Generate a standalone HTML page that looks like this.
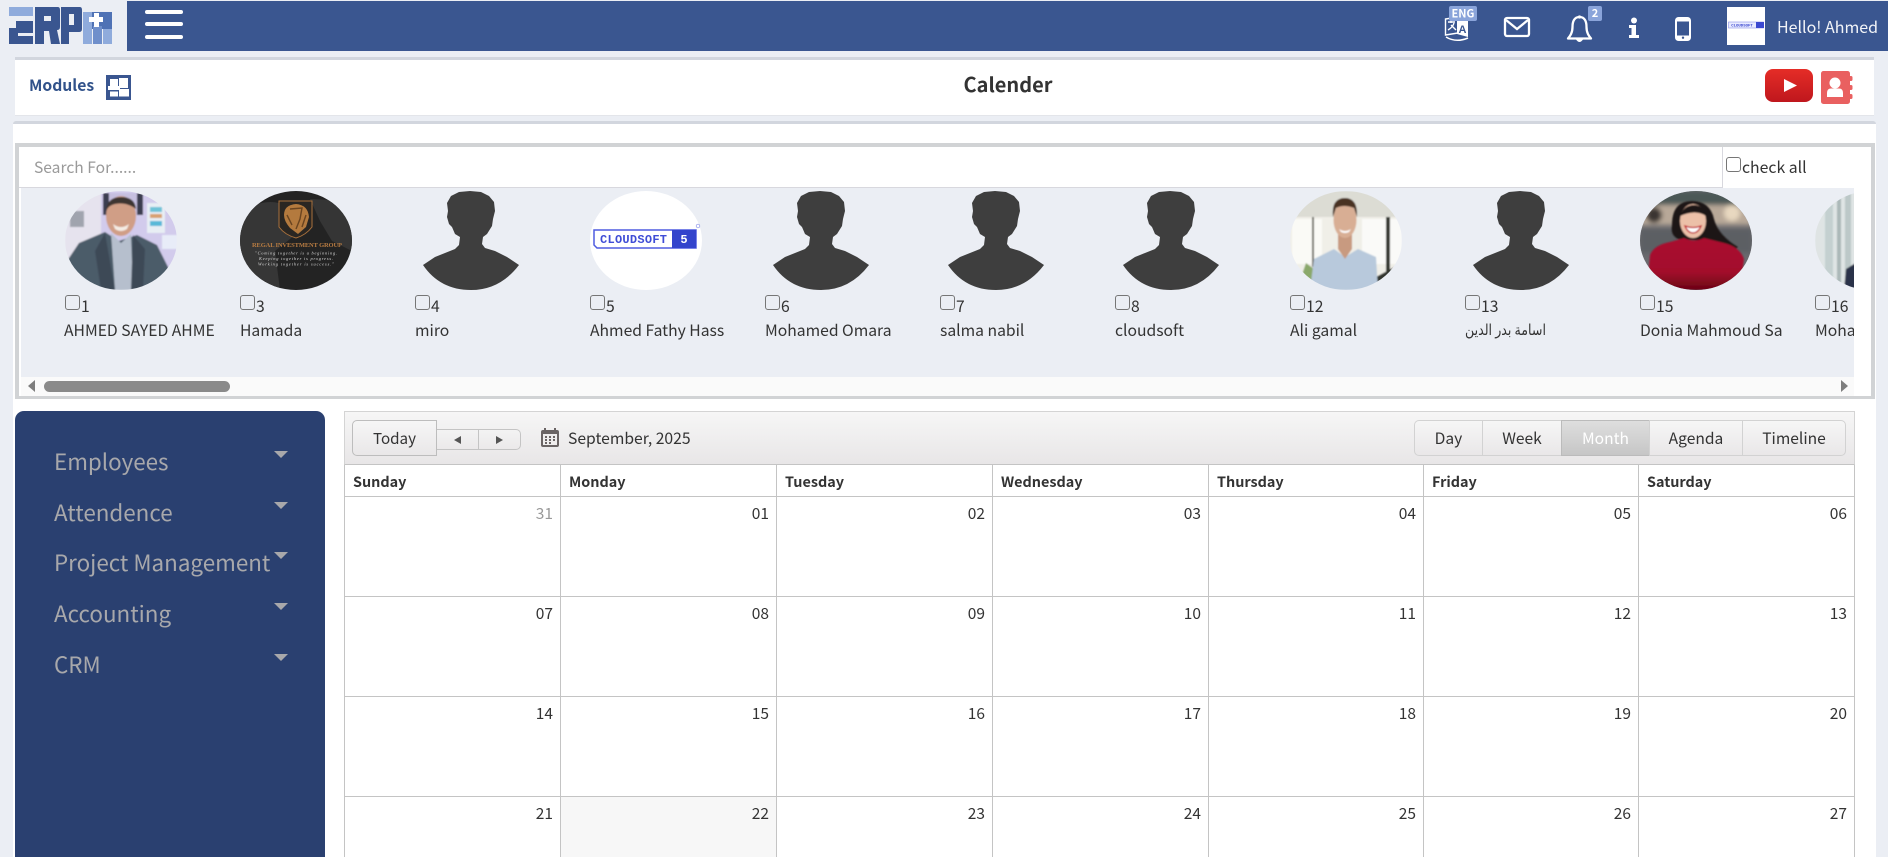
<!DOCTYPE html>
<html lang="en">
<head>
<meta charset="utf-8">
<title>Calender</title>
<style>
*{box-sizing:border-box}
html,body{margin:0;padding:0;width:1888px;height:857px;overflow:hidden;background:#ebeef4}
body{position:relative;font-family:"Noto Sans CJK JP","Liberation Sans",sans-serif;font-size:15.7px;color:#333}
.a{position:absolute;white-space:nowrap}
.cb{position:absolute;width:15px;height:15px;border:1px solid #767676;border-radius:3px}
.num{position:absolute;font-size:15.7px;line-height:20px;color:#333}
.nm{position:absolute;font-size:15.7px;line-height:22px;color:#333;white-space:nowrap}
svg{position:absolute;display:block;overflow:visible}
.menu{position:absolute;left:54px;font-size:22.4px;line-height:32px;color:#a8a8ab;white-space:nowrap}
.car{position:absolute;left:274px;width:0;height:0;border-left:7px solid transparent;border-right:7px solid transparent;border-top:7px solid #a8a8ab}
.grid{position:absolute;left:344px;top:465px;width:1511px;display:grid;grid-template-columns:216px 216px 216px 216px 215px 215px 215px;border-left:1px solid #c4c4c4;border-right:1px solid #c4c4c4}
.h{height:32px;border-right:1px solid #c4c4c4;border-bottom:1px solid #c4c4c4;font-weight:700;font-size:14.4px;line-height:33px;padding-left:8px;color:#333}
.c{height:100px;border-right:1px solid #c4c4c4;border-bottom:1px solid #c4c4c4;text-align:right;padding:6px 7px 0 0;font-size:15.5px;line-height:20px;color:#333}
.h:nth-child(7n),.c:nth-child(7n){border-right:0}
.vb{position:absolute;top:420px;height:36px;line-height:34px;text-align:center;font-size:15.6px;color:#333;border:1px solid #d2d2d2;border-right:0;background:linear-gradient(#f6f6f6,#e9e7e8)}
</style>
</head>
<body>

<!-- top bar -->
<div class="a" style="left:127px;top:1px;width:1761px;height:50px;background:#3a5690"></div>

<!-- logo -->
<svg style="left:0;top:0" width="127" height="51" viewBox="0 0 127 51">
<rect x="9" y="7" width="24" height="9" fill="#8fabdc"/>
<path d="M16 21H33V33H18V36H33V44H9V28H16Z" fill="#3a5690"/>
<path fill-rule="evenodd" d="M35 7H58Q60 7 60 10V27Q60 30 57 30L60 44H51L49 31H44V44H35ZM44 16V21H51V16Z" fill="#3a5690"/>
<path fill-rule="evenodd" d="M61 7H80Q82 7 82 10V29Q82 32 79 32H69V44H61ZM69 14V25H74V14Z" fill="#3a5690"/>
<rect x="83" y="12" width="29" height="17" fill="#4f72b5"/>
<rect x="83" y="12" width="9" height="32" fill="#8fabdc"/>
<rect x="103" y="29" width="9" height="15" fill="#8fabdc"/>
<rect x="93" y="26" width="9" height="18" fill="#6f8fcb"/>
<rect x="94" y="13" width="5" height="14" fill="#fff"/>
<rect x="89" y="17" width="14" height="5" fill="#fff"/>
</svg>

<!-- hamburger -->
<div class="a" style="left:145px;top:10px;width:38px;height:4px;background:#fff;border-radius:2px"></div>
<div class="a" style="left:145px;top:22px;width:38px;height:4px;background:#fff;border-radius:2px"></div>
<div class="a" style="left:145px;top:35px;width:38px;height:4px;background:#fff;border-radius:2px"></div>

<!-- translate icon -->
<svg style="left:1440px;top:4px" width="44" height="40" viewBox="0 0 44 40">
<path d="M5.500 15V31L18 29V13Z" fill="none" stroke="#fff" stroke-width="1.400"/>
<path d="M17 13L28 13V33L17 30Z" fill="#fff"/>
<path d="M8 18H15M11 16V19M8 26Q13 23 14 19M11 21L16 26" fill="none" stroke="#fff" stroke-width="1.400"/>
<text x="18.500" y="29" font-family="Liberation Sans,sans-serif" font-size="11" font-weight="700" fill="#3a5690">A</text>
<path d="M6 33Q16 39 28 34" fill="none" stroke="#fff" stroke-width="1.500"/>
<rect x="9" y="2" width="28" height="15" rx="2" fill="#8aa4da"/>
<text x="23" y="13.500" text-anchor="middle" font-family="Noto Sans CJK JP,sans-serif" font-size="11" font-weight="700" fill="#fff">ENG</text>
</svg>

<!-- envelope -->
<svg style="left:1503px;top:16px" width="28" height="22" viewBox="0 0 28 22">
<rect x="2" y="2" width="24" height="18" rx="2" fill="none" stroke="#fff" stroke-width="2.300"/>
<path d="M3 4L14 13L25 4" fill="none" stroke="#fff" stroke-width="2.300"/>
</svg>

<!-- bell -->
<svg style="left:1566px;top:14px" width="28" height="30" viewBox="0 0 28 30">
<path d="M13.500 3C8 3 6.500 8 6.500 13C6.500 19 4 22 2 24.500H25C23 22 20.500 19 20.500 13C20.500 8 19 3 13.500 3Z" fill="none" stroke="#fff" stroke-width="2.300" stroke-linejoin="round"/>
<path d="M10 25.500Q13.500 30.500 17 25.500Z" fill="#fff"/>
<circle cx="13.500" cy="3" r="1.600" fill="#fff"/>
</svg>
<div class="a" style="left:1588px;top:6px;width:14px;height:15px;border-radius:2px;background:#8aa4da;color:#fff;font-size:11px;font-weight:700;line-height:15px;text-align:center">2</div>

<!-- info -->
<svg style="left:1628px;top:17px" width="12" height="22" viewBox="0 0 12 22">
<circle cx="6" cy="3.500" r="3" fill="#fff"/>
<path d="M1 8H8V18H11V21H1V18H3.500V11H1Z" fill="#fff"/>
</svg>

<!-- phone -->
<svg style="left:1675px;top:17px" width="16" height="24" viewBox="0 0 16 24">
<rect x="1" y="1" width="14" height="22" rx="2.500" fill="none" stroke="#fff" stroke-width="2"/>
<rect x="1" y="1" width="14" height="3.500" rx="1.500" fill="#fff"/>
<rect x="1" y="18.500" width="14" height="4.500" rx="1.500" fill="#fff"/>
<circle cx="8" cy="20.700" r="1.200" fill="#3a5690"/>
</svg>

<!-- avatar small -->
<div class="a" style="left:1727px;top:7px;width:38px;height:38px;background:#fff"></div>
<svg style="left:1728px;top:21px" width="36" height="9" viewBox="0 0 36 9">
<rect x="0.500" y="1" width="35" height="6" fill="#e8eaff" stroke="#8a92e8" stroke-width="0.600"/>
<rect x="28" y="1" width="8" height="6" fill="#3a48d0"/>
<text x="14" y="5.700" text-anchor="middle" font-family="Liberation Mono,monospace" font-size="4" font-weight="700" fill="#3a48d0">CLOUDSOFT</text>
</svg>
<div class="a" style="left:1777px;top:13px;font-size:16px;line-height:26px;color:#f2f4f8">Hello! Ahmed</div>

<!-- modules bar -->
<div class="a" style="left:15px;top:57px;width:1859px;height:59px;background:#fff;border-top:3px solid #d2d6de;border-bottom:1px solid #e3e5ea"></div>
<div class="a" style="left:29px;top:74px;font-size:15.7px;font-weight:700;line-height:22px;color:#31528a">Modules</div>
<svg style="left:106px;top:75px" width="25" height="25" viewBox="0 0 25 25">
<rect width="25" height="25" fill="#3a5690"/>
<rect x="4" y="4" width="8" height="7.500" fill="#fff"/>
<rect x="13" y="3" width="9" height="10" fill="#fff"/>
<rect x="2" y="11" width="12" height="4" fill="#fff"/>
<rect x="4" y="16.500" width="8" height="5" fill="#fff"/>
<rect x="13" y="14" width="10" height="7.500" fill="#fff"/>
</svg>
<div class="a" style="left:0;top:69px;width:2016px;text-align:center;font-size:20px;font-weight:700;line-height:30px;color:#333">Calender</div>

<!-- youtube -->
<svg style="left:1765px;top:69px" width="48" height="33" viewBox="0 0 48 33">
<defs><linearGradient id="yt" x1="0" y1="0" x2="0" y2="1"><stop offset="0" stop-color="#e52d27"/><stop offset="1" stop-color="#bf171d"/></linearGradient></defs>
<rect width="48" height="33" rx="8" fill="url(#yt)"/>
<path d="M19 10V23L32 16.500Z" fill="#fff"/>
</svg>

<!-- contact book -->
<svg style="left:1821px;top:71px" width="32" height="34" viewBox="0 0 32 34">
<rect x="0" y="0" width="29" height="33" rx="2.500" fill="#e96060"/>
<rect x="28" y="5" width="3.500" height="5" rx="1.500" fill="#e96060"/>
<rect x="28" y="14" width="3.500" height="5" rx="1.500" fill="#e96060"/>
<rect x="28" y="23" width="3.500" height="5" rx="1.500" fill="#e96060"/>
<circle cx="14" cy="12" r="5.500" fill="#fff"/>
<path d="M6 26V22Q6 17.500 10 17.500H18Q22 17.500 22 22V26Z" fill="#fff"/>
</svg>

<!-- white panel -->
<div class="a" style="left:13px;top:121px;width:1863px;height:736px;background:#fff;border-top:3px solid #d2d6de;border-radius:3px 3px 0 0"></div>

<!-- users box -->
<div class="a" style="left:15px;top:143px;width:1860px;height:256px;border:4px solid #d1d3d5;border-bottom-width:3px;background:#fff"></div>
<div class="a" style="left:19px;top:147px;width:1703px;height:41px;border-bottom:1px solid #d8d8de;background:#fff"></div>
<div class="a" style="left:34px;top:155px;font-size:15.6px;line-height:24px;color:#9a9a9a">Search For......</div>
<div class="a" style="left:1722px;top:147px;width:1px;height:41px;background:#d8d8de"></div>
<div class="cb" style="left:1726px;top:157px"></div>
<div class="a" style="left:1742px;top:155px;font-size:15.8px;line-height:24px;color:#333">check all</div>

<!-- users strip -->
<div class="a" id="strip" style="left:21px;top:188px;width:1833px;height:189px;background:#ebeef4;overflow:hidden">
  <!-- 1 -->
  <svg style="left:44px;top:3px" width="112" height="99" viewBox="0 0 112 99">
    <defs>
      <clipPath id="e"><ellipse cx="56" cy="49.500" rx="56" ry="49.500"/></clipPath>
      <filter id="b1"><feGaussianBlur stdDeviation="0.700"/></filter>
      <filter id="b3"><feGaussianBlur stdDeviation="2.500"/></filter>
      <linearGradient id="red" x1="0" y1="0" x2="0" y2="1"><stop offset="0" stop-color="#a90e2e"/><stop offset="0.650" stop-color="#a30d2c"/><stop offset="1" stop-color="#6a0414"/></linearGradient>
    </defs>
    <g clip-path="url(#e)"><g filter="url(#b1)">
      <rect width="112" height="99" fill="#d2cbec"/>
      <rect width="36" height="99" fill="#e6e3ee"/>
      <rect x="5" y="20" width="14" height="16" fill="#a0a4ae"/>
      <rect x="38" y="2" width="40" height="22" fill="#3a3c50"/>
      <rect x="44" y="2" width="28" height="22" fill="#c6bfe0"/>
      <rect x="82" y="12" width="18" height="30" fill="#e8eef4"/>
      <rect x="85" y="16" width="12" height="5" fill="#6ec3d8"/>
      <rect x="85" y="23" width="12" height="4" fill="#d8a070"/>
      <rect x="85" y="30" width="12" height="5" fill="#58b8d8"/>
      <rect x="97" y="44" width="15" height="14" fill="#e8ecf8"/>
      <ellipse cx="56" cy="25" rx="15" ry="20" fill="#d09e86"/>
      <path d="M41 20Q42 6 56 6Q70 6 71 18Q62 11 50 13Q44 14 41 20Z" fill="#3e3430"/>
      <path d="M48 33Q56 39 64 33L62 38Q56 42 50 38Z" fill="#f4ece4"/>
      <path d="M2 70L14 52L40 41L54 50L72 44L92 54L104 78L100 99H6Z" fill="#4b5b69"/>
      <path d="M46 42L56 52L66 43L68 99H50Z" fill="#b6bfcd"/>
      <path d="M40 42L50 99H36L30 60Z" fill="#3c4a57"/>
      <path d="M68 44L66 99H78L80 58Z" fill="#3c4a57"/>
    </g></g>
  </svg>
  <div class="cb" style="left:44px;top:107px"></div>
  <div class="num" style="left:60px;top:108px">1</div>
  <div class="nm" style="left:43px;top:131px">AHMED SAYED AHME</div>

  <!-- 3 -->
  <svg style="left:219px;top:3px" width="112" height="99" viewBox="0 0 112 99">
    <g clip-path="url(#e)">
      <rect width="112" height="99" fill="#232323"/>
      <path d="M0 20Q30 5 45 15L60 40L35 60L40 99H0Z" fill="#363636"/>
      <path d="M70 8L112 10V60L92 50L80 30Z" fill="#353535"/>
      <path d="M39 10H72V36Q66 44 56 47Q45 44 39 36Z" fill="#2a2622" stroke="#a8703c" stroke-width="1"/>
      <path d="M44 24Q44 14 56 13Q68 14 69 26L66 36L58 43L50 37Q44 30 44 24Z" fill="#b47a3e"/>
      <path d="M50 18L62 17L60 28L56 38M47 24L52 34M66 24L62 36" fill="none" stroke="#6a4420" stroke-width="1.400"/>
      <text x="57" y="56" text-anchor="middle" font-family="Liberation Serif,serif" font-size="6.500" font-weight="700" fill="#b87c42" textLength="90">REGAL INVESTMENT GROUP</text>
      <text x="56" y="63.500" text-anchor="middle" font-family="Liberation Serif,serif" font-size="4.400" font-style="italic" fill="#ddd" textLength="82">"Coming together is a beginning.</text>
      <text x="56" y="69" text-anchor="middle" font-family="Liberation Serif,serif" font-size="4.400" font-style="italic" fill="#ddd" textLength="74">Keeping together is progress.</text>
      <text x="56" y="74.500" text-anchor="middle" font-family="Liberation Serif,serif" font-size="4.400" font-style="italic" fill="#ddd" textLength="76">Working together is success."</text>
    </g>
  </svg>
  <div class="cb" style="left:219px;top:107px"></div>
  <div class="num" style="left:235px;top:108px">3</div>
  <div class="nm" style="left:219px;top:131px">Hamada</div>

  <!-- 4 -->
  <svg style="left:394px;top:3px" width="112" height="99" viewBox="0 0 112 99">
    <path d="M8 74L20 66L30 62L40 58L44 54L45 46L40 43L37 36L34 33L32 26L33 20L32 12L36 5L44 1L55 0L66 1L74 5L79 11L80 20L78 28L77 35L72 43L68 46L67 53L70 57L80 60L92 66L104 74Q85 99 56 99Q25 99 8 74Z" fill="#3e3e3e"/>
  </svg>
  <div class="cb" style="left:394px;top:107px"></div>
  <div class="num" style="left:410px;top:108px">4</div>
  <div class="nm" style="left:394px;top:131px">miro</div>

  <!-- 5 -->
  <svg style="left:569px;top:3px" width="112" height="99" viewBox="0 0 112 99">
    <ellipse cx="56" cy="49.500" rx="56" ry="49.500" fill="#fff"/>
    <path d="M4 39H106V57H7L4 54Z" fill="#fff" stroke="#4f5ce0" stroke-width="1.500"/>
    <rect x="82" y="39" width="24" height="18" fill="#3344cc"/>
    <text x="43.500" y="52" text-anchor="middle" font-family="Liberation Mono,monospace" font-size="12" font-weight="700" fill="#3f4dd6" textLength="67">CLOUDSOFT</text>
    <text x="94" y="52" text-anchor="middle" font-family="Liberation Mono,monospace" font-size="12" font-weight="700" fill="#fff">5</text>
    <circle cx="108" cy="35" r="1.800" fill="none" stroke="#8a92e8" stroke-width="0.700"/>
  </svg>
  <div class="cb" style="left:569px;top:107px"></div>
  <div class="num" style="left:585px;top:108px">5</div>
  <div class="nm" style="left:569px;top:131px">Ahmed Fathy Hass</div>

  <!-- 6 -->
  <svg style="left:744px;top:3px" width="112" height="99" viewBox="0 0 112 99"><path d="M8 74L20 66L30 62L40 58L44 54L45 46L40 43L37 36L34 33L32 26L33 20L32 12L36 5L44 1L55 0L66 1L74 5L79 11L80 20L78 28L77 35L72 43L68 46L67 53L70 57L80 60L92 66L104 74Q85 99 56 99Q25 99 8 74Z" fill="#3e3e3e"/></svg>
  <div class="cb" style="left:744px;top:107px"></div>
  <div class="num" style="left:760px;top:108px">6</div>
  <div class="nm" style="left:744px;top:131px">Mohamed Omara</div>

  <!-- 7 -->
  <svg style="left:919px;top:3px" width="112" height="99" viewBox="0 0 112 99"><path d="M8 74L20 66L30 62L40 58L44 54L45 46L40 43L37 36L34 33L32 26L33 20L32 12L36 5L44 1L55 0L66 1L74 5L79 11L80 20L78 28L77 35L72 43L68 46L67 53L70 57L80 60L92 66L104 74Q85 99 56 99Q25 99 8 74Z" fill="#3e3e3e"/></svg>
  <div class="cb" style="left:919px;top:107px"></div>
  <div class="num" style="left:935px;top:108px">7</div>
  <div class="nm" style="left:919px;top:131px">salma nabil</div>

  <!-- 8 -->
  <svg style="left:1094px;top:3px" width="112" height="99" viewBox="0 0 112 99"><path d="M8 74L20 66L30 62L40 58L44 54L45 46L40 43L37 36L34 33L32 26L33 20L32 12L36 5L44 1L55 0L66 1L74 5L79 11L80 20L78 28L77 35L72 43L68 46L67 53L70 57L80 60L92 66L104 74Q85 99 56 99Q25 99 8 74Z" fill="#3e3e3e"/></svg>
  <div class="cb" style="left:1094px;top:107px"></div>
  <div class="num" style="left:1110px;top:108px">8</div>
  <div class="nm" style="left:1094px;top:131px">cloudsoft</div>

  <!-- 12 -->
  <svg style="left:1269px;top:3px" width="112" height="99" viewBox="0 0 112 99">
    <g clip-path="url(#e)"><g filter="url(#b1)">
      <rect width="112" height="99" fill="#f0efe8"/>
      <rect width="112" height="26" fill="#dcdcd4"/>
      <rect x="2" y="28" width="30" height="45" fill="#fafaf6"/>
      <rect x="72" y="28" width="40" height="45" fill="#fafaf8"/>
      <rect x="96" y="26" width="4" height="70" fill="#33352f"/>
      <rect x="22" y="26" width="2" height="50" fill="#6e6e66"/>
      <path d="M86 99V86L112 72V99Z" fill="#33352f"/>
      <path d="M8 95L16 72L24 78L26 99Z" fill="#8aa86a"/>
      <path d="M20 99L24 68L44 58L55 66L68 58L86 66L88 99Z" fill="#b8c9dc"/>
      <path d="M48 42H62V58L55 68L48 58Z" fill="#c89a80"/>
      <ellipse cx="55" cy="29" rx="11.500" ry="18" fill="#d8ae94"/>
      <path d="M43 26Q41 7 55 7Q68 7 67 26L64 17Q54 13 46 17Z" fill="#4a3224"/>
      <path d="M49 38Q55 42 61 38L59 41Q55 43 51 41Z" fill="#fff"/>
    </g></g>
  </svg>
  <div class="cb" style="left:1269px;top:107px"></div>
  <div class="num" style="left:1285px;top:108px">12</div>
  <div class="nm" style="left:1269px;top:131px">Ali gamal</div>

  <!-- 13 -->
  <svg style="left:1444px;top:3px" width="112" height="99" viewBox="0 0 112 99"><path d="M8 74L20 66L30 62L40 58L44 54L45 46L40 43L37 36L34 33L32 26L33 20L32 12L36 5L44 1L55 0L66 1L74 5L79 11L80 20L78 28L77 35L72 43L68 46L67 53L70 57L80 60L92 66L104 74Q85 99 56 99Q25 99 8 74Z" fill="#3e3e3e"/></svg>
  <div class="cb" style="left:1444px;top:107px"></div>
  <div class="num" style="left:1460px;top:108px">13</div>
  <div class="nm" dir="rtl" style="left:1444px;top:132px;font-size:15px;font-family:'Liberation Serif','DejaVu Sans',sans-serif;transform:scaleX(.84);transform-origin:left center">اسامة بدر الدين</div>

  <!-- 15 -->
  <svg style="left:1619px;top:3px" width="112" height="99" viewBox="0 0 112 99">
    <g clip-path="url(#e)">
      <rect width="112" height="99" fill="#6a6a6e"/>
      <g filter="url(#b3)">
        <rect width="112" height="14" fill="#4c5856"/>
        <rect y="14" width="112" height="20" fill="#b8a898"/>
        <circle cx="14" cy="24" r="8" fill="#3a3430"/>
        <circle cx="92" cy="22" r="8" fill="#e8d8c0"/>
        <rect y="38" width="112" height="24" fill="#5c5e64"/>
      </g>
      <g filter="url(#b1)">
        <path d="M32 34Q32 10 52 10Q70 10 74 28Q78 44 98 56L88 64L70 50L38 48Q30 44 32 34Z" fill="#1e1616"/>
        <path d="M7 99L10 64Q14 54 30 51L44 47Q54 52 64 47L84 52Q100 56 104 68L100 99Z" fill="url(#red)"/>
        <ellipse cx="53" cy="30" rx="13" ry="17" fill="#ecc0a8"/>
        <path d="M40 25Q44 14 54 14Q63 14 66 25Q56 18 40 25Z" fill="#1e1616"/>
        <path d="M45 35Q53 38 61 35Q58 42 53 42Q48 42 45 35Z" fill="#fff" stroke="#c01020" stroke-width="1.300"/>
      </g>
    </g>
  </svg>
  <div class="cb" style="left:1619px;top:107px"></div>
  <div class="num" style="left:1635px;top:108px">15</div>
  <div class="nm" style="left:1619px;top:131px">Donia Mahmoud Sa</div>

  <!-- 16 -->
  <svg style="left:1794px;top:3px" width="112" height="99" viewBox="0 0 112 99">
    <g clip-path="url(#e)"><g filter="url(#b1)">
      <rect width="112" height="99" fill="#dfe4e4"/>
      <rect x="10" y="8" width="8" height="80" fill="#c4d0d0"/>
      <rect x="22" y="2" width="4" height="90" fill="#aab8b8"/>
      <rect x="30" y="2" width="6" height="90" fill="#bcc8c8"/>
      <path d="M29 99L31 78L50 66V99Z" fill="#2b3348"/>
    </g></g>
  </svg>
  <div class="cb" style="left:1794px;top:107px"></div>
  <div class="num" style="left:1810px;top:108px">16</div>
  <div class="nm" style="left:1794px;top:131px">Mohamed</div>
</div>

<!-- scrollbar -->
<div class="a" style="left:21px;top:377px;width:1833px;height:19px;background:#fafafa"></div>
<div class="a" style="left:28px;top:380px;width:0;height:0;border-top:6.500px solid transparent;border-bottom:6.500px solid transparent;border-right:7px solid #7e7e7e"></div>
<div class="a" style="left:1841px;top:380px;width:0;height:0;border-top:6.500px solid transparent;border-bottom:6.500px solid transparent;border-left:7px solid #7e7e7e"></div>
<div class="a" style="left:44px;top:381px;width:186px;height:11px;background:#8a8a8a;border-radius:6px"></div>

<!-- sidebar -->
<div class="a" style="left:15px;top:411px;width:310px;height:446px;background:#2a4070;border-radius:9px 9px 0 0"></div>
<div class="menu" style="top:445px">Employees</div>
<div class="car" style="top:451px"></div>
<div class="menu" style="top:496px">Attendence</div>
<div class="car" style="top:502px"></div>
<div class="menu" style="top:546px">Project Management</div>
<div class="car" style="top:552px"></div>
<div class="menu" style="top:597px">Accounting</div>
<div class="car" style="top:603px"></div>
<div class="menu" style="top:648px">CRM</div>
<div class="car" style="top:654px"></div>

<!-- calendar toolbar -->
<div class="a" style="left:344px;top:411px;width:1511px;height:54px;background:linear-gradient(#f6f6f6,#e8e6e7);border:1px solid #d4d4d4;border-bottom:1px solid #c4c4c4"></div>
<div class="a" style="left:352px;top:420px;width:85px;height:36px;background:linear-gradient(#f6f6f6,#e9e7e8);border:1px solid #bdbdbd;border-radius:5px 0 0 5px;text-align:center;line-height:34px;font-size:15.2px;color:#333">Today</div>
<div class="a" style="left:437px;top:429px;width:84px;height:21px;border:1px solid #c4c4c4;border-left:0;border-radius:0 5px 5px 0;background:linear-gradient(#f3f3f3,#ebe9ea)"></div>
<div class="a" style="left:478px;top:429px;width:1px;height:21px;background:#c4c4c4"></div>
<div class="a" style="left:454px;top:436px;width:0;height:0;border-top:4px solid transparent;border-bottom:4px solid transparent;border-right:7px solid #555"></div>
<div class="a" style="left:496px;top:436px;width:0;height:0;border-top:4px solid transparent;border-bottom:4px solid transparent;border-left:7px solid #555"></div>
<svg style="left:541px;top:428px" width="18" height="19" viewBox="0 0 18 19">
<rect x="0" y="2" width="18" height="17" rx="2" fill="#6a6464"/>
<rect x="3" y="0" width="2" height="4" fill="#6a6464"/>
<rect x="13" y="0" width="2" height="4" fill="#6a6464"/>
<rect x="2" y="6" width="14" height="11" fill="#efeded"/>
<path d="M4 8h2v2h-2zM8 8h2v2h-2zM12 8h2v2h-2zM4 11h2v2h-2zM8 11h2v2h-2zM12 11h2v2h-2zM4 14h2v2h-2zM8 14h2v2h-2z" fill="#6a6464"/>
</svg>
<div class="a" style="left:568px;top:426px;font-size:15.7px;line-height:24px;color:#333">September, 2025</div>

<div class="vb" style="left:1414px;width:68px;border-radius:5px 0 0 5px">Day</div>
<div class="vb" style="left:1482px;width:79px">Week</div>
<div class="vb" style="left:1561px;width:88px;background:linear-gradient(#dedede,#c6c6c6);color:#fff;border-color:#bbb">Month</div>
<div class="vb" style="left:1649px;width:93px">Agenda</div>
<div class="vb" style="left:1742px;width:104px;border-right:1px solid #d2d2d2;border-radius:0 5px 5px 0">Timeline</div>

<!-- calendar grid -->
<div class="grid">
<div class="h">Sunday</div><div class="h">Monday</div><div class="h">Tuesday</div><div class="h">Wednesday</div><div class="h">Thursday</div><div class="h">Friday</div><div class="h">Saturday</div>
<div class="c" style="color:#999">31</div><div class="c">01</div><div class="c">02</div><div class="c">03</div><div class="c">04</div><div class="c">05</div><div class="c">06</div>
<div class="c">07</div><div class="c">08</div><div class="c">09</div><div class="c">10</div><div class="c">11</div><div class="c">12</div><div class="c">13</div>
<div class="c">14</div><div class="c">15</div><div class="c">16</div><div class="c">17</div><div class="c">18</div><div class="c">19</div><div class="c">20</div>
<div class="c">21</div><div class="c" style="background:#f7f7f7">22</div><div class="c">23</div><div class="c">24</div><div class="c">25</div><div class="c">26</div><div class="c">27</div>
</div>

</body>
</html>
